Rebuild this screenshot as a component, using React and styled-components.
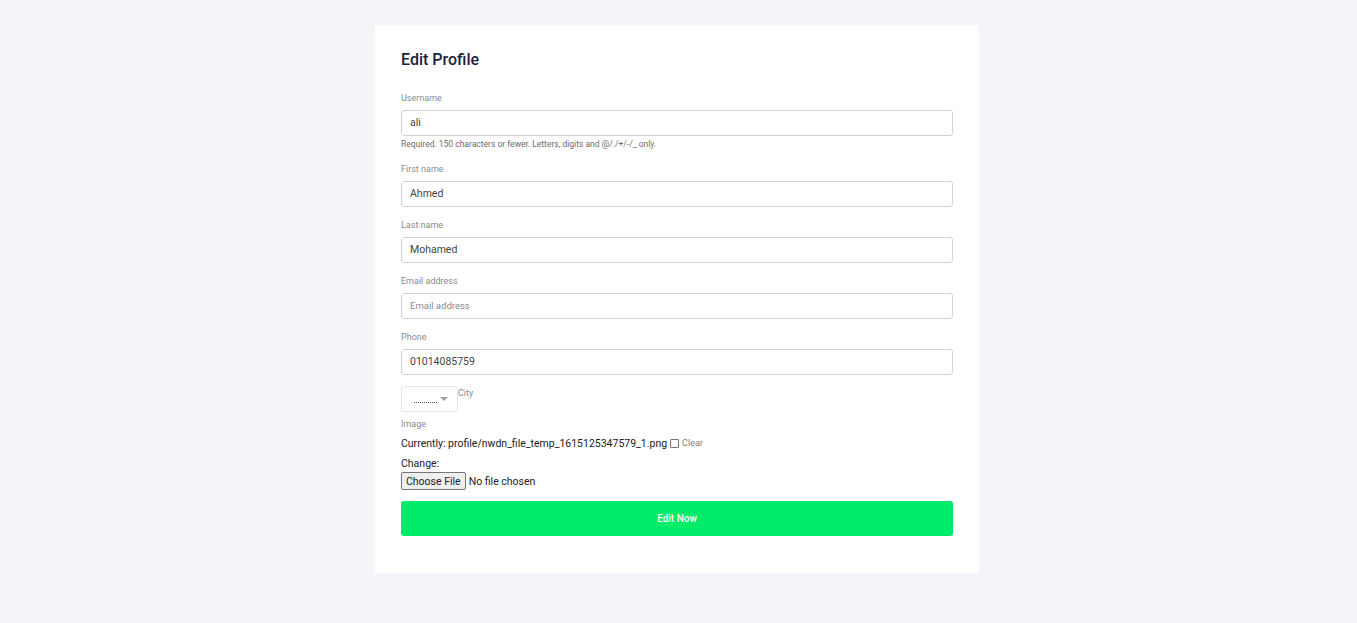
import React from "react";
import styled, { createGlobalStyle } from "styled-components";

const GlobalStyle = createGlobalStyle`
  html, body {
    margin: 0;
    padding: 0;
    background: #f4f5f9;
    font-family: Roboto, "Liberation Sans", Arial, sans-serif;
  }
`;

const Page = styled.div`
  min-height: 623px;
  display: flex;
  justify-content: center;
  align-items: flex-start;
  padding-top: 25px;
  box-sizing: border-box;
`;

const Card = styled.div`
  width: 604px;
  background: #ffffff;
  padding: 25px 26px 37px;
  box-sizing: border-box;
  margin-left: -3px;
`;

const Title = styled.h2`
  margin: 0 0 22px;
  font-size: 16px;
  line-height: 20px;
  font-weight: 500;
  color: #1d1d3b;
`;

const Form = styled.form`
  display: flex;
  flex-direction: column;
`;

const Field = styled.div`
  display: flex;
  flex-direction: column;
  margin-bottom: ${(p) => p.$gap || 12}px;
`;

const Label = styled.label`
  font-size: 9px;
  line-height: 12px;
  color: #8a8a8f;
  margin-bottom: 6px;
`;

const Input = styled.input`
  height: 26px;
  box-sizing: border-box;
  border: 1px solid #cfd2da;
  border-radius: 3px;
  padding: 0 8px 1px;
  font-family: Roboto, "Liberation Sans", Arial, sans-serif;
  font-size: 10.5px;
  color: #444;
  outline: none;

  &::placeholder {
    color: #8a8a8f;
    font-size: 9.5px;
  }
`;

const Help = styled.span`
  font-size: 8.5px;
  line-height: 10px;
  color: #6b6b73;
  margin-top: 3px;
`;

const CityRow = styled.div`
  display: flex;
  align-items: flex-start;
  margin-bottom: 6px;
`;

const SelectBox = styled.div`
  width: 57px;
  height: 26px;
  box-sizing: border-box;
  border: 1px solid #e2e4ea;
  border-radius: 3px;
  display: flex;
  align-items: center;
  padding-left: 12px;
  gap: 3px;
`;

const Dashes = styled.span`
  width: 23px;
  border-bottom: 1px dotted #555;
  margin-top: 6px;
`;

const Caret = styled.span`
  width: 0;
  height: 0;
  border-left: 4px solid transparent;
  border-right: 4px solid transparent;
  border-top: 4px solid #a0a0a0;
`;

const CityLabel = styled.span`
  font-size: 9px;
  line-height: 12px;
  color: #8a8a8f;
  margin-top: 1px;
`;

const ImageLabel = styled.span`
  font-size: 9px;
  line-height: 12px;
  color: #8a8a8f;
  margin-bottom: 7px;
`;

const Line = styled.div`
  font-size: 10.5px;
  line-height: 13px;
  color: #222;
  display: flex;
  align-items: center;
  margin-bottom: ${(p) => p.$mb || 0}px;
`;

const Check = styled.span`
  width: 7px;
  height: 7px;
  border: 1px solid #777;
  border-radius: 1px;
  margin: 0 3px 0 3px;
`;

const Clear = styled.span`
  font-size: 9px;
  color: #808080;
`;

const FileRow = styled.div`
  display: flex;
  align-items: center;
  font-size: 10.5px;
  color: #222;
  margin-bottom: 11px;
`;

const FileButton = styled.span`
  height: 18px;
  box-sizing: border-box;
  padding: 0 4px;
  border: 1px solid #767676;
  border-radius: 2px;
  background: #efefef;
  display: flex;
  align-items: center;
  margin-right: 3px;
  font-size: 10.5px;
`;

const Submit = styled.button`
  height: 35px;
  border: none;
  border-radius: 3px;
  background: #00eb69;
  color: #ffffff;
  font-family: Roboto, "Liberation Sans", Arial, sans-serif;
  font-size: 10px;
  font-weight: 500;
  cursor: pointer;
`;

const fields = [
  { label: "First name", value: "Ahmed" },
  { label: "Last name", value: "Mohamed" },
  { label: "Email address", value: "", placeholder: "Email address" },
  { label: "Phone", value: "01014085759", gap: 11 },
];

export default function App() {
  return (
    <>
      <GlobalStyle />
      <Page>
        <Card>
          <Title>Edit Profile</Title>
          <Form onSubmit={(e) => e.preventDefault()}>
            <Field $gap={14}>
              <Label>Username</Label>
              <Input defaultValue="ali" />
              <Help>Required. 150 characters or fewer. Letters, digits and @/./+/-/_ only.</Help>
            </Field>
            {fields.map((f) => (
              <Field key={f.label} $gap={f.gap}>
                <Label>{f.label}</Label>
                <Input defaultValue={f.value} placeholder={f.placeholder} />
              </Field>
            ))}
            <CityRow>
              <SelectBox>
                <Dashes />
                <Caret />
              </SelectBox>
              <CityLabel>City</CityLabel>
            </CityRow>
            <ImageLabel>Image</ImageLabel>
            <Line $mb={7}>
              Currently: profile/nwdn_file_temp_1615125347579_1.png
              <Check />
              <Clear>Clear</Clear>
            </Line>
            <Line $mb={2}>Change:</Line>
            <FileRow>
              <FileButton>Choose File</FileButton>
              No file chosen
            </FileRow>
            <Submit type="submit">Edit Now</Submit>
          </Form>
        </Card>
      </Page>
    </>
  );
}
